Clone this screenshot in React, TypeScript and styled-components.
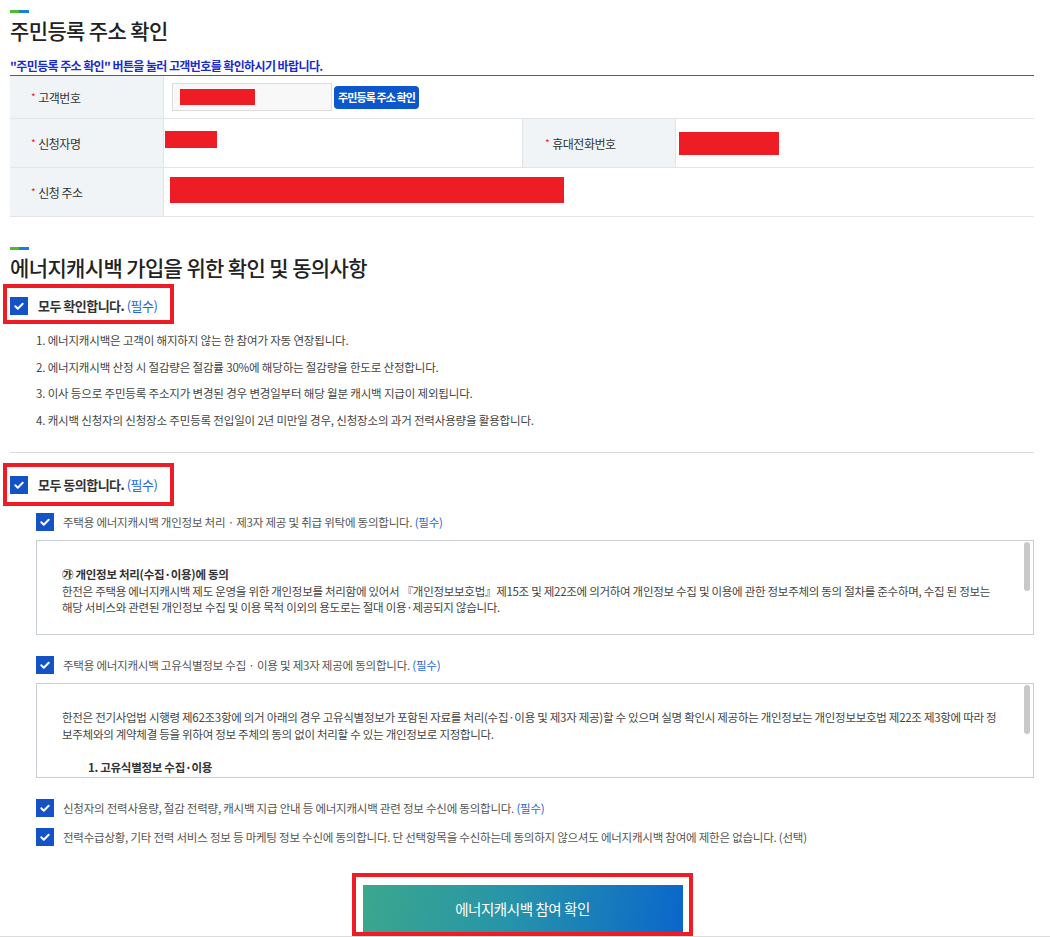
import React from "react";
import styled, { createGlobalStyle, css } from "styled-components";

const Global = createGlobalStyle`
  * { box-sizing: border-box; }
  html, body { margin: 0; padding: 0; background: #fff; }
  body { font-family: "Noto Sans CJK KR", "Noto Sans", sans-serif; color: #333; }
`;

const tight = css`
  letter-spacing: -0.04em;
`;

const Page = styled.div`
  width: 1050px;
  padding: 10px 16px 0 10px;
`;

const Accent = styled.div<{ $mt?: number }>`
  width: 19px;
  height: 3px;
  margin-top: ${(p) => p.$mt ?? 0}px;
  background: linear-gradient(90deg, #4cbb2f 0 50%, #1a7ee0 50% 100%);
`;

const Title = styled.h2`
  margin: 5px 0 0;
  font-size: 21px;
  line-height: 25px;
  font-weight: 500;
  color: #222;
  letter-spacing: -0.03em;
`;

const Notice = styled.p`
  margin: 15px 0 0;
  font-size: 12px;
  line-height: 16px;
  font-weight: 700;
  color: #1a2bd0;
  letter-spacing: -0.05em;
`;

const InfoTable = styled.div`
  margin-top: 1px;
  border-top: 1px solid #2d62b8;
  display: grid;
  grid-template-columns: 154px 1fr 154px 1fr;
  grid-template-rows: 43px 49px 49px;
`;

const LabelCell = styled.div<{ $second?: boolean }>`
  display: flex;
  align-items: center;
  padding-left: ${(p) => (p.$second ? 22 : 21)}px;
  background: #f1f4f7;
  border-bottom: 1px solid #e2e4e7;
  border-right: 1px solid #e2e4e7;
  ${(p) => p.$second && "border-left: 1px solid #e2e4e7;"}
  font-size: 12px;
  color: #333;
  ${tight}
`;

const Req = styled.span`
  color: #e3262b;
  font-size: 10px;
  margin-right: 3px;
  position: relative;
  top: -1px;
`;

const ValueCell = styled.div<{ $span?: number; $pt?: number; $pl: number; $center?: boolean }>`
  display: flex;
  align-items: ${(p) => (p.$center ? "center" : "flex-start")};
  grid-column: span ${(p) => p.$span ?? 1};
  padding-top: ${(p) => p.$pt ?? 0}px;
  padding-left: ${(p) => p.$pl}px;
  border-bottom: 1px solid #e2e4e7;
`;

const Redact = styled.div<{ $w: number; $h: number }>`
  width: ${(p) => p.$w}px;
  height: ${(p) => p.$h}px;
  background: #ee1c25;
`;

const Field = styled.div`
  width: 160px;
  height: 28px;
  display: flex;
  align-items: center;
  padding-left: 7px;
  border: 1px solid #dcdcdc;
  background: #f8f8f8;
`;

const SmallBtn = styled.button`
  margin-left: 2px;
  width: 85px;
  height: 23px;
  border: none;
  border-radius: 4px;
  background: #0b57cb;
  color: #fff;
  font-family: inherit;
  font-size: 11px;
  font-weight: 700;
  padding: 0;
  letter-spacing: -0.08em;
`;

const AllBox = styled.div<{ $mt: number; $pb: number }>`
  display: flex;
  align-items: center;
  gap: 10px;
  width: fit-content;
  margin: ${(p) => p.$mt}px 0 0 -7px;
  border: 4px solid #ee1c25;
  padding: 9px 13px ${(p) => p.$pb}px 3px;
`;

const AllText = styled.span`
  font-size: 13px;
  line-height: 18px;
  font-weight: 700;
  color: #333;
  ${tight}
`;

const Req2 = styled.span`
  font-weight: 400;
  color: #2466d6;
`;

const Box = styled.span`
  flex: none;
  width: 18px;
  height: 18px;
  display: inline-flex;
  align-items: center;
  justify-content: center;
  background: #1353c6;
`;

const List = styled.ol`
  list-style: none;
  margin: 3px 0 0 26px;
  padding: 0;
`;

const ListItem = styled.li`
  font-size: 11.5px;
  line-height: 26.5px;
  color: #444;
  letter-spacing: -0.015em;
`;

const Divider = styled.hr`
  margin: 19px 0 0;
  border: none;
  border-top: 1px solid #dcdcdc;
  height: 0;
`;

const Consents = styled.div`
  padding-left: 26px;
  margin-top: 7px;
`;

const CheckRow = styled.div<{ $mt?: number }>`
  display: flex;
  align-items: center;
  gap: 9px;
  height: 18px;
  margin-top: ${(p) => p.$mt ?? 0}px;
`;

const RowText = styled.span`
  font-size: 11.5px;
  line-height: 18px;
  color: #555;
  white-space: nowrap;
  letter-spacing: -0.02em;
`;

const TermsFrame = styled.div`
  position: relative;
  margin-top: 9px;
`;

const Terms = styled.div`
  height: 95px;
  border: 1px solid #c9ced6;
  overflow: hidden;
  padding: 25px 12px 16px 25px;
  font-size: 11.5px;
  line-height: 16.5px;
  color: #444;
  letter-spacing: -0.025em;
`;

const ScrollThumb = styled.div`
  position: absolute;
  top: 2px;
  right: 4px;
  width: 6px;
  height: 49px;
  border-radius: 3px;
  background: #c8c8c8;
`;

const TermsLine = styled.div<{ $bold?: boolean; $indent?: number; $gap?: boolean }>`
  white-space: nowrap;
  font-weight: ${(p) => (p.$bold ? 700 : 400)};
  color: ${(p) => (p.$bold ? "#333" : "#444")};
  padding-left: ${(p) => p.$indent ?? 0}px;
  margin-top: ${(p) => (p.$gap ? "16.5px" : "0")};
`;

const SubmitWrap = styled.div`
  display: flex;
  justify-content: center;
  margin-top: 27px;
`;

const Highlight = styled.div`
  border: 4px solid #ee1c25;
  padding: 8px 6px 0 7px;
`;

const Submit = styled.button`
  display: block;
  width: 320px;
  height: 47px;
  border: none;
  background: linear-gradient(100deg, #3ba78d 0%, #2795a8 45%, #0a66cc 100%);
  color: #fff;
  font-family: inherit;
  font-size: 14.5px;
  padding: 0;
  letter-spacing: -0.03em;
`;

const Footer = styled.div`
  margin-left: -10px;
  width: 1050px;
  height: 40px;
  border-top: 1px solid #dcdcdc;
`;

function Check() {
  return (
    <Box>
      <svg width="18" height="18" viewBox="0 0 18 18">
        <path d="M5.3 9.3l2.5 2.4 4.9-4.9" fill="none" stroke="#fff" strokeWidth="2" strokeLinecap="round" strokeLinejoin="round" />
      </svg>
    </Box>
  );
}

export default function App() {
  return (
    <>
      <Global />
      <Page>
        <Accent />
        <Title>주민등록 주소 확인</Title>
        <Notice>"주민등록 주소 확인" 버튼을 눌러 고객번호를 확인하시기 바랍니다.</Notice>
        <InfoTable>
          <LabelCell>
            <Req>*</Req>고객번호
          </LabelCell>
          <ValueCell $span={3} $pl={8} $center>
            <Field>
              <Redact $w={75} $h={16} />
            </Field>
            <SmallBtn>주민등록 주소 확인</SmallBtn>
          </ValueCell>
          <LabelCell>
            <Req>*</Req>신청자명
          </LabelCell>
          <ValueCell $pl={1} $pt={12}>
            <Redact $w={52} $h={17} />
          </ValueCell>
          <LabelCell $second>
            <Req>*</Req>휴대전화번호
          </LabelCell>
          <ValueCell $pl={3} $pt={13}>
            <Redact $w={100} $h={23} />
          </ValueCell>
          <LabelCell>
            <Req>*</Req>신청 주소
          </LabelCell>
          <ValueCell $span={3} $pl={6} $pt={9}>
            <Redact $w={394} $h={26} />
          </ValueCell>
        </InfoTable>

        <Accent $mt={30} />
        <Title>에너지캐시백 가입을 위한 확인 및 동의사항</Title>
        <AllBox $mt={4} $pb={5}>
          <Check />
          <AllText>
            모두 확인합니다. <Req2>(필수)</Req2>
          </AllText>
        </AllBox>
        <List>
          <ListItem>1. 에너지캐시백은 고객이 해지하지 않는 한 참여가 자동 연장됩니다.</ListItem>
          <ListItem>2. 에너지캐시백 산정 시 절감량은 절감률 30%에 해당하는 절감량을 한도로 산정합니다.</ListItem>
          <ListItem>3. 이사 등으로 주민등록 주소지가 변경된 경우 변경일부터 해당 월분 캐시백 지급이 제외됩니다.</ListItem>
          <ListItem>4. 캐시백 신청자의 신청장소 주민등록 전입일이 2년 미만일 경우, 신청장소의 과거 전력사용량을 활용합니다.</ListItem>
        </List>
        <Divider />
        <AllBox $mt={10} $pb={8}>
          <Check />
          <AllText>
            모두 동의합니다. <Req2>(필수)</Req2>
          </AllText>
        </AllBox>

        <Consents>
          <CheckRow>
            <Check />
            <RowText>
              주택용 에너지캐시백 개인정보 처리 · 제3자 제공 및 취급 위탁에 동의합니다. <Req2>(필수)</Req2>
            </RowText>
          </CheckRow>
          <TermsFrame>
            <Terms>
              <TermsLine $bold>㉮ 개인정보 처리(수집·이용)에 동의</TermsLine>
              <TermsLine>
                한전은 주택용 에너지캐시백 제도 운영을 위한 개인정보를 처리함에 있어서 『개인정보보호법』제15조 및 제22조에 의거하여 개인정보 수집 및 이용에 관한 정보주체의 동의 절차를 준수하며, 수집 된 정보는
              </TermsLine>
              <TermsLine>해당 서비스와 관련된 개인정보 수집 및 이용 목적 이외의 용도로는 절대 이용·제공되지 않습니다.</TermsLine>
              <TermsLine $gap $indent={26}>1. 수집·이용 목적 : 주택용 에너지캐시백 참여 신청 및 참여자 관리, 캐시백 지급, 서비스 안내</TermsLine>
              <TermsLine $indent={26}>2. 수집·이용 항목 : 성명, 고객번호, 휴대전화번호, 주소, 전력사용량, 계좌정보</TermsLine>
            </Terms>
            <ScrollThumb />
          </TermsFrame>

          <CheckRow $mt={21}>
            <Check />
            <RowText>
              주택용 에너지캐시백 고유식별정보 수집 · 이용 및 제3자 제공에 동의합니다. <Req2>(필수)</Req2>
            </RowText>
          </CheckRow>
          <TermsFrame>
            <Terms>
              <TermsLine>
                한전은 전기사업법 시행령 제62조3항에 의거 아래의 경우 고유식별정보가 포함된 자료를 처리(수집·이용 및 제3자 제공)할 수 있으며 실명 확인시 제공하는 개인정보는 개인정보보호법 제22조 제3항에 따라 정
              </TermsLine>
              <TermsLine>보주체와의 계약체결 등을 위하여 정보 주체의 동의 없이 처리할 수 있는 개인정보로 지정합니다.</TermsLine>
              <TermsLine $gap $bold $indent={26}>1. 고유식별정보 수집·이용</TermsLine>
              <TermsLine $indent={26}>가. 수집·이용 목적 : 실명 확인 및 에너지캐시백 참여자 본인 확인</TermsLine>
            </Terms>
            <ScrollThumb />
          </TermsFrame>

          <CheckRow $mt={21}>
            <Check />
            <RowText>
              신청자의 전력사용량, 절감 전력량, 캐시백 지급 안내 등 에너지캐시백 관련 정보 수신에 동의합니다. <Req2>(필수)</Req2>
            </RowText>
          </CheckRow>
          <CheckRow $mt={11}>
            <Check />
            <RowText>
              전력수급상황, 기타 전력 서비스 정보 등 마케팅 정보 수신에 동의합니다. 단 선택항목을 수신하는데 동의하지 않으셔도 에너지캐시백 참여에 제한은 없습니다. (선택)
            </RowText>
          </CheckRow>
        </Consents>

        <SubmitWrap>
          <Highlight>
            <Submit>에너지캐시백 참여 확인</Submit>
          </Highlight>
        </SubmitWrap>
        <Footer />
      </Page>
    </>
  );
}
